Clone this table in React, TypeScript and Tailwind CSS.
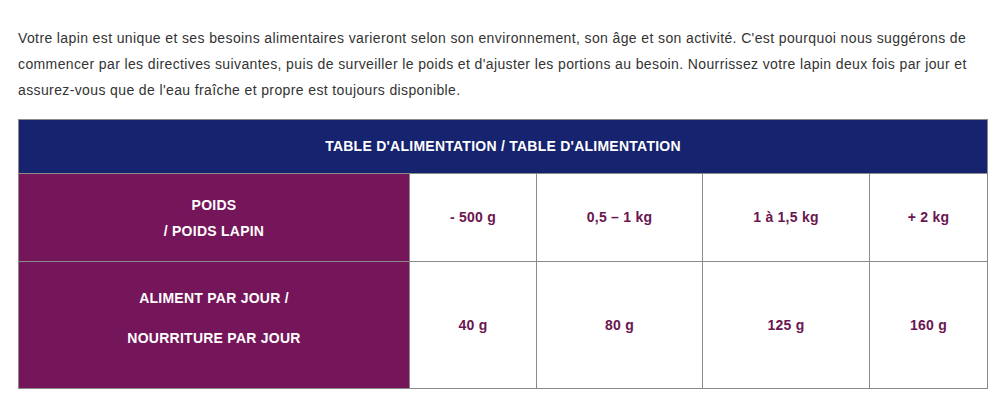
import React from "react";

export default function App() {
  const weights = ["- 500 g", "0,5 – 1 kg", "1 à 1,5 kg", "+ 2 kg"];
  const foods = ["40 g", "80 g", "125 g", "160 g"];
  return (
    <div className="w-[995px] h-[404px] bg-white font-['Liberation_Sans',Arial,sans-serif] px-[18px] pt-[25px]">
      <p className="text-[14px] leading-[26px] tracking-[0.38px] text-[#333333] w-[960px]">
        Votre lapin est unique et ses besoins alimentaires varieront selon son environnement, son âge et son activité. C'est pourquoi nous suggérons de commencer par les directives suivantes, puis de surveiller le poids et d'ajuster les portions au besoin. Nourrissez votre lapin deux fois par jour et assurez-vous que de l'eau fraîche et propre est toujours disponible.
      </p>
      <div className="mt-[16px] w-[970px] bg-[#8a8a8a] p-px grid grid-cols-[390px_126px_165px_166px_117px] grid-rows-[53px_87px_126px] gap-px text-[14px] tracking-[0.25px] font-bold">
        <div className="col-span-5 bg-[#16236f] text-white flex items-center justify-center">
          TABLE D'ALIMENTATION / TABLE D'ALIMENTATION
        </div>
        <div className="bg-[#76165a] text-white flex flex-col items-center justify-center leading-[26px]">
          <span>POIDS</span>
          <span>/ POIDS LAPIN</span>
        </div>
        {weights.map((w) => (
          <div key={w} className="bg-white text-[#6b1650] flex items-center justify-center">
            {w}
          </div>
        ))}
        <div className="bg-[#76165a] text-white flex flex-col items-center justify-center leading-[26px] gap-[14px] pb-[15px]">
          <span>ALIMENT PAR JOUR /</span>
          <span>NOURRITURE PAR JOUR</span>
        </div>
        {foods.map((f) => (
          <div key={f} className="bg-white text-[#6b1650] flex items-center justify-center">
            {f}
          </div>
        ))}
      </div>
    </div>
  );
}
